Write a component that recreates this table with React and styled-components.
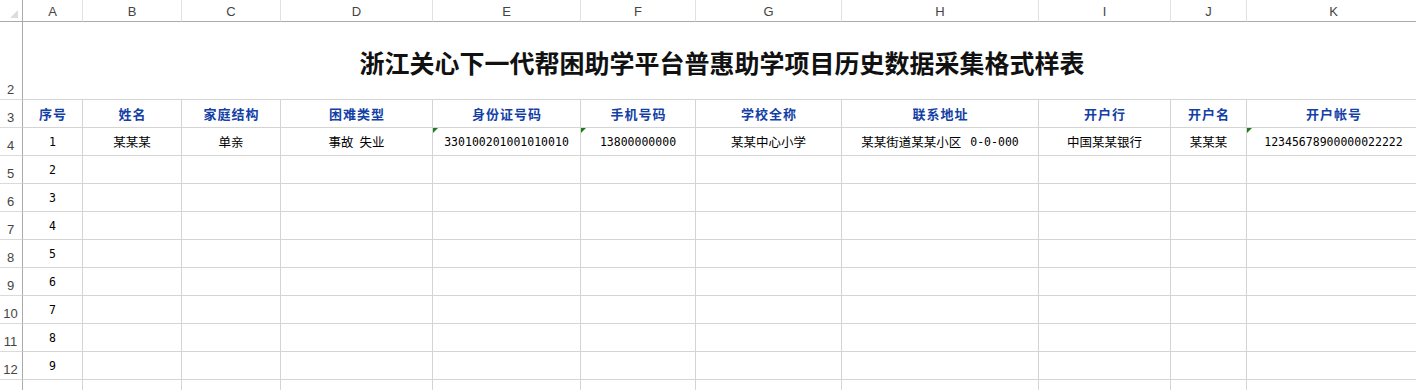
import React from "react";
import styled, { createGlobalStyle, css } from "styled-components";

const Global = createGlobalStyle`
  html, body { margin: 0; padding: 0; background: #fff; }
  body { font-family: "Liberation Sans", "Noto Sans CJK SC", sans-serif; }
`;

const COLS = [60, 99, 99, 152, 148, 115, 146, 197, 132, 76, 174];
const LETTERS = ["A", "B", "C", "D", "E", "F", "G", "H", "I", "J", "K"];

const Viewport = styled.div`
  width: 1416px;
  height: 390px;
  overflow: hidden;
  background: #fff;
`;

const Sheet = styled.div`
  display: grid;
  grid-template-columns: 23px ${COLS.map((c) => c + "px").join(" ")};
  grid-template-rows: 22px 78px repeat(11, 28px);
  width: max-content;
`;

const Corner = styled.div`
  position: relative;
  box-sizing: border-box;
  border-right: 1px solid #ababab;
  border-bottom: 1px solid #ababab;
  &::after {
    content: "";
    position: absolute;
    left: 10px;
    top: 10px;
    width: 8px;
    height: 8px;
    background: #dcdcdc;
    clip-path: polygon(100% 0, 100% 100%, 0 100%);
  }
`;

const ColHead = styled.div`
  box-sizing: border-box;
  border-right: 1px solid #e1e1e1;
  border-bottom: 1px solid #ababab;
  display: flex;
  align-items: center;
  justify-content: center;
  font-family: "Liberation Sans", Arial, sans-serif;
  font-size: 13px;
  color: #444;
  padding-top: 1px;
`;

const RowHead = styled.div`
  box-sizing: border-box;
  border-right: 1px solid #ababab;
  border-bottom: 1px solid #dadada;
  display: flex;
  align-items: flex-end;
  justify-content: center;
  padding: 0 1px 3px 0;
  font-family: "Liberation Sans", Arial, sans-serif;
  font-size: 13px;
  line-height: 13px;
  color: #444;
`;

const TitleCell = styled.div`
  grid-column: 2 / -1;
  box-sizing: border-box;
  border-bottom: 1px solid #d4d4d4;
  display: flex;
  align-items: center;
  justify-content: center;
  padding-top: 2px;
  font-family: "Noto Sans CJK SC", sans-serif;
  font-weight: 700;
  font-size: 25px;
  color: #111;
  white-space: nowrap;
`;

const Cell = styled.div`
  position: relative;
  box-sizing: border-box;
  border-right: 1px solid #d4d4d4;
  border-bottom: 1px solid #d4d4d4;
  display: flex;
  align-items: center;
  justify-content: center;
  white-space: nowrap;
  overflow: hidden;
  font-family: "Noto Sans CJK SC", sans-serif;
  font-size: 12.5px;
  color: #000;
  ${(p) =>
    p.$head &&
    css`
      font-size: 13px;
      letter-spacing: 1px;
      font-weight: 700;
      color: #1240a6;
      padding-left: 1px;
    `}
`;

const Gap = styled.span`
  display: inline-block;
  width: ${(p) => p.$w}px;
`;

const Num = styled.span`
  font-family: "DejaVu Sans Mono", "Liberation Mono", monospace;
  font-size: 11.5px;
  color: #000;
`;

const Flag = styled.span`
  position: absolute;
  left: 0;
  top: 0;
  width: 5px;
  height: 5px;
  background: #1e7a1e;
  clip-path: polygon(0 0, 100% 0, 0 100%);
`;

const HEADERS = [
  "序号",
  "姓名",
  "家庭结构",
  "困难类型",
  "身份证号码",
  "手机号码",
  "学校全称",
  "联系地址",
  "开户行",
  "开户名",
  "开户帐号",
];

const FIRST_ROW = [
  { v: <Num>1</Num> },
  { v: "某某某" },
  { v: "单亲" },
  {
    v: (
      <>
        事故<Gap $w={6} />失业
      </>
    ),
  },
  { v: <Num>330100201001010010</Num>, flag: true },
  { v: <Num>13800000000</Num>, flag: true },
  { v: "某某中心小学" },
  {
    v: (
      <>
        某某街道某某小区<Gap $w={9} />
        <Num>0-0-000</Num>
      </>
    ),
  },
  { v: "中国某某银行" },
  { v: "某某某" },
  { v: <Num>12345678900000022222</Num>, flag: true },
];

export default function App() {
  const emptyRows = [2, 3, 4, 5, 6, 7, 8, 9, 10];
  return (
    <Viewport>
      <Global />
      <Sheet>
        <Corner />
        {LETTERS.map((l) => (
          <ColHead key={l}>{l}</ColHead>
        ))}

        <RowHead>2</RowHead>
        <TitleCell>浙江关心下一代帮困助学平台普惠助学项目历史数据采集格式样表</TitleCell>

        <RowHead>3</RowHead>
        {HEADERS.map((h) => (
          <Cell key={h} $head>
            {h}
          </Cell>
        ))}

        <RowHead>4</RowHead>
        {FIRST_ROW.map((c, i) => (
          <Cell key={i}>
            {c.flag && <Flag />}
            {c.v}
          </Cell>
        ))}

        {emptyRows.map((n, r) => (
          <React.Fragment key={n}>
            <RowHead>{n <= 9 ? r + 5 : null}</RowHead>
            {COLS.map((_, i) => (
              <Cell key={i}>{i === 0 && n <= 9 ? <Num>{n}</Num> : null}</Cell>
            ))}
          </React.Fragment>
        ))}
      </Sheet>
    </Viewport>
  );
}
